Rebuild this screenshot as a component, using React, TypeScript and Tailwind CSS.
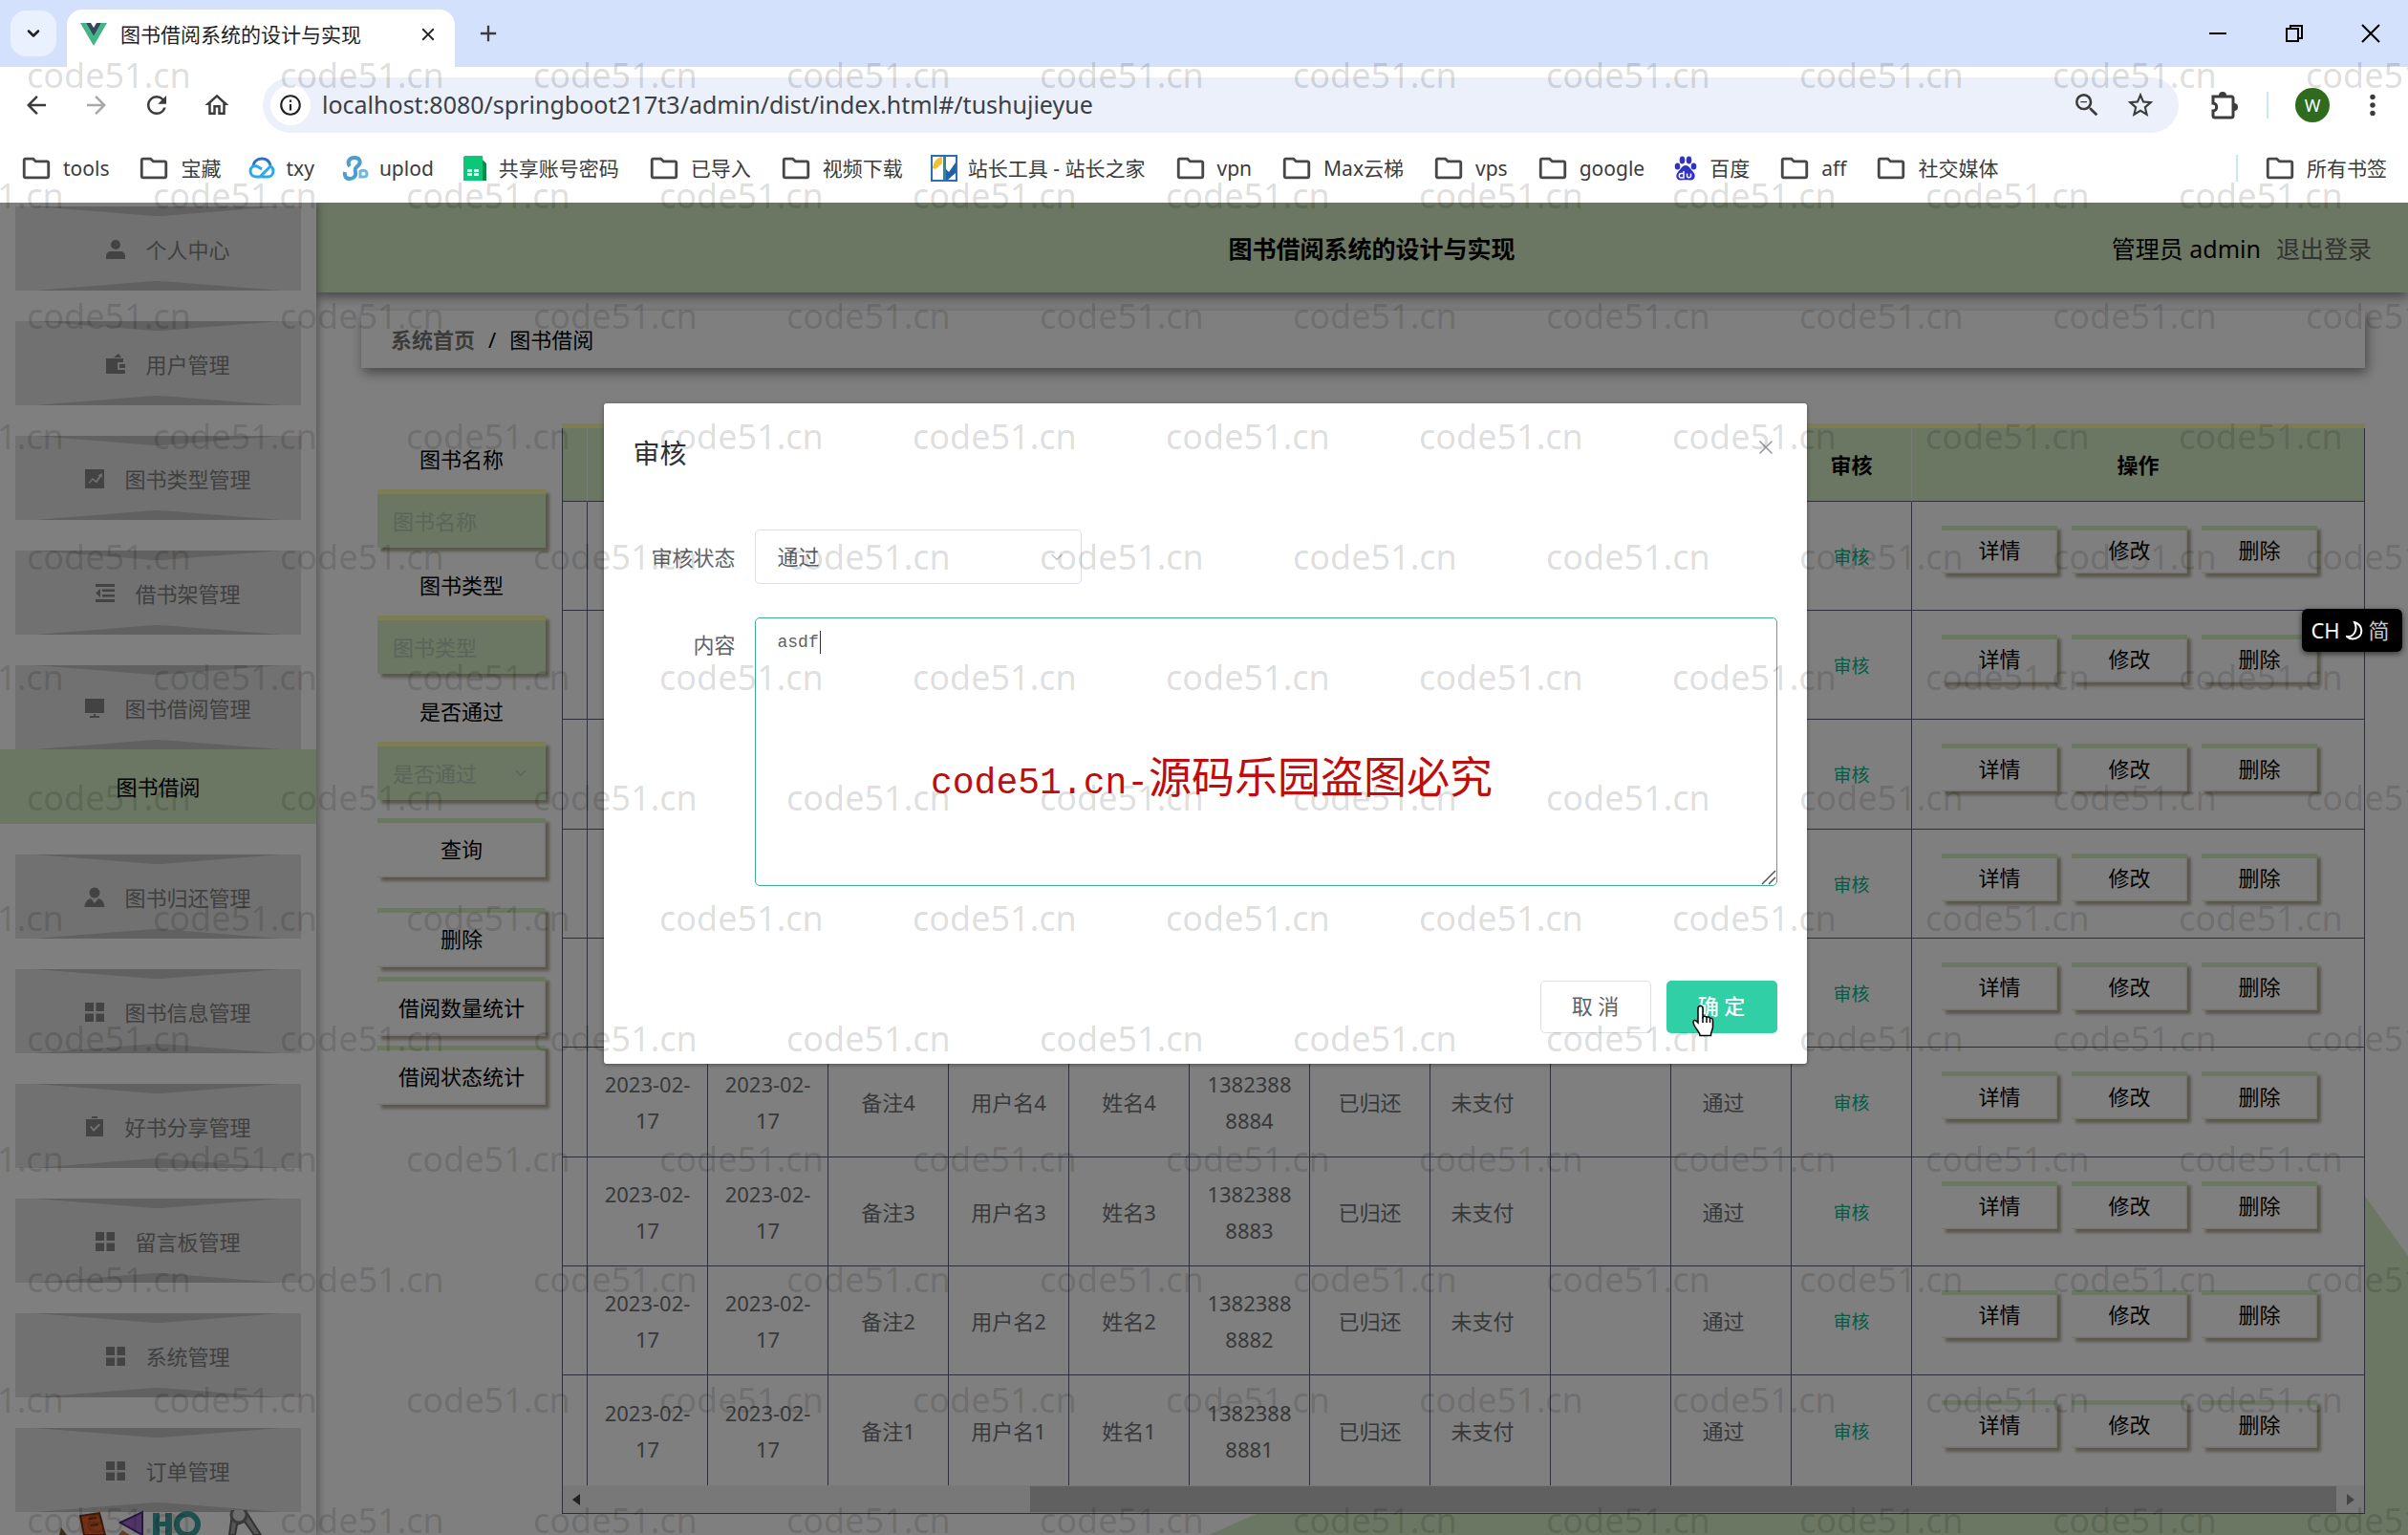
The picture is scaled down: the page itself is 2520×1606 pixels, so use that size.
import type { ReactNode } from 'react';
import {
  MdAdd,
  MdArrowBack,
  MdArrowForward,
  MdClose,
  MdInfoOutline,
  MdMoreVert,
  MdOutlineFolder,
  MdOutlineHome,
  MdRefresh,
  MdStarBorder,
  MdZoomOut,
} from 'react-icons/md';
import { ChevronDown, X } from 'lucide-react';

type IconName = 'user' | 'wallet' | 'trend' | 'fold' | 'monitor' | 'custom' | 'grid' | 'claim';

const MENU: { label: string; icon: IconName; child?: string }[] = [
  { label: '个人中心', icon: 'user' },
  { label: '用户管理', icon: 'wallet' },
  { label: '图书类型管理', icon: 'trend' },
  { label: '借书架管理', icon: 'fold' },
  { label: '图书借阅管理', icon: 'monitor', child: '图书借阅' },
  { label: '图书归还管理', icon: 'custom' },
  { label: '图书信息管理', icon: 'grid' },
  { label: '好书分享管理', icon: 'claim' },
  { label: '留言板管理', icon: 'grid' },
  { label: '系统管理', icon: 'grid' },
  { label: '订单管理', icon: 'grid' },
];

const ROWS = [9, 8, 7, 6, 5, 4, 3, 2, 1];

const ICONS: Record<IconName, ReactNode> = {
  user: (
    <>
      <circle cx="11" cy="6" r="5" />
      <path d="M1 21v-3c0-3 2-5 5-5h10c3 0 5 2 5 5v3z" />
    </>
  ),
  wallet: (
    <path
      fillRule="evenodd"
      d="M9 4l5-4 3 4zM1 5h18v4h-6v8h8v4H1zM15 11h6v4h-6z"
    />
  ),
  trend: (
    <path
      fillRule="evenodd"
      d="M1 1h20v20H1zM4.500 15l4.500-5 3.500 3 3.500-5-1.500-.5 4-2.500.5 5-1.500-1-4.500 6.500-4-3.500-3.500 4z"
    />
  ),
  fold: <path d="M1 1h20v3H1zM1 17h20v3H1zM8 6.500h13v2.500H8zM8 12h13v2.500H8zM6 6v9l-5-4.500z" />,
  monitor: <path d="M1 1h20v15H1zM10 17h2v2h4v2H6v-2h4z" />,
  custom: (
    <>
      <circle cx="11" cy="6" r="5.500" />
      <path d="M7 12l4 5 4-5c4 1 6 4 6.500 9h-21c.5-5 2.500-8 6.500-9z" />
    </>
  ),
  grid: <path d="M1 1h9v9H1zM12.500 1h8.500v9h-8.500zM1 12.500h9V21H1zM12.500 12.500h8.500V21h-8.500z" />,
  claim: (
    <path
      fillRule="evenodd"
      d="M8 0h6v2h-6zM2 3h18v18H2zM6 11l4 5 7-7-1.500-1.500-5.500 5.500-2.500-3z"
    />
  ),
};

function MenuIcon({ name }: { name: IconName }) {
  return (
    <svg viewBox="0 0 22 22" className="w-[22px] h-[22px] fill-[#868686] shrink-0">
      {ICONS[name]}
    </svg>
  );
}

function Folder() {
  return <MdOutlineFolder className="w-[34px] h-[34px] shrink-0 text-[#474747]" />;
}

function PuzzleIcon() {
  return (
    <svg viewBox="0 0 32 32" className="w-8 h-8" fill="none" stroke="#3c3c3c" strokeWidth="3">
      <path d="M4 7h19a2 2 0 012 2v18a2 2 0 01-2 2H6a2 2 0 01-2-2v-5c5 0 5-8 0-8z" />
      <path d="M10 6a4 4 0 018 0zM26 14a4 4 0 010 8z" fill="#3c3c3c" stroke="none" />
    </svg>
  );
}

function CloudIcon() {
  return (
    <svg viewBox="0 0 28 24" className="w-7 h-6" fill="none" strokeWidth="3">
      <path d="M5 11C5 5 9 2 14 2s8 3 9 7" stroke="#2b6fd0" />
      <path d="M14 13l-5-3C5 9 2 11 2 15s3 6 7 6h3l11-11c2 1 3 3 3 5 0 4-3 6-6 6h-6" stroke="#27a9ea" />
    </svg>
  );
}

function UploadIcon() {
  return (
    <svg viewBox="0 0 28 26" className="w-7 h-[26px]" fill="none" strokeWidth="4">
      <path d="M8 11c-3-4-1-9 5-9s7 5 4 8-4 3-3 7-2 7-6 7-6-3-5-7" stroke="#4f9ccf" />
      <path d="M19 22v-6c4-2 7 0 7 3s-2 3-4 3z" stroke="#6bb8e0" strokeWidth="3" />
    </svg>
  );
}

function SheetIcon() {
  return (
    <svg viewBox="0 0 24 26" className="w-6 h-[26px]">
      <path d="M0 2C0 1 1 0 2 0h18v26H0z" fill="#0bc777" />
      <path d="M20 4l4 4v18h-4z" fill="#078a4c" />
      <path d="M4 14h5v3H4zM11 14h5v3h-5zM4 18h5v3H4zM11 18h5v3h-5z" fill="#e9fff5" />
    </svg>
  );
}

function ToolsIcon() {
  return (
    <svg viewBox="0 0 28 28" className="w-7 h-7">
      <rect x="1" y="1" width="26" height="26" fill="#fff" stroke="#2a6fb0" strokeWidth="2" />
      <path d="M2 14c1-7 4-11 10-12v7L5 15z" fill="#f2c12e" />
      <path d="M13 2h3v24h-3z" fill="#2c8a8c" />
      <path d="M16 15l3 3 7-10v11l-8 7h-2z" fill="#1c63a8" />
    </svg>
  );
}

function PawIcon() {
  return (
    <svg viewBox="0 0 24 26" className="w-6 h-[26px]" fill="#2f32c8">
      <ellipse cx="3.500" cy="11" rx="2.800" ry="3.600" />
      <ellipse cx="8.500" cy="4.500" rx="2.800" ry="4" />
      <ellipse cx="15.500" cy="4.500" rx="2.800" ry="4" />
      <ellipse cx="20.500" cy="11" rx="2.800" ry="3.600" />
      <path d="M12 10c4 0 5 4 8 7s2 9-3 8.500c-4-.5-6-.5-10 0-5 .5-6-5.500-3-8.500s4-7 8-7z" />
      <path d="M10 16v7H7.500c-3 0-3-4.500 0-4.500H10M13.500 18.500v3c0 1.500 4 1.500 4 0v-3" fill="none" stroke="#fff" strokeWidth="1.500" />
    </svg>
  );
}

const BOOKMARKS: { label: string; icon?: ReactNode }[] = [
  { label: 'tools' },
  { label: '宝藏' },
  { label: 'txy', icon: <CloudIcon /> },
  { label: 'uplod', icon: <UploadIcon /> },
  { label: '共享账号密码', icon: <SheetIcon /> },
  { label: '已导入' },
  { label: '视频下载' },
  { label: '站长工具 - 站长之家', icon: <ToolsIcon /> },
  { label: 'vpn' },
  { label: 'Max云梯' },
  { label: 'vps' },
  { label: 'google' },
  { label: '百度', icon: <PawIcon /> },
  { label: 'aff' },
  { label: '社交媒体' },
];

function Bookmark({ label, icon }: { label: string; icon?: ReactNode }) {
  return (
    <a
      href="#"
      className={`flex items-center text-[21px] leading-8 text-[#3c3c3c] whitespace-nowrap ${icon ? 'gap-[11px]' : 'gap-[14px] pl-1'}`}
    >
      <span className="flex w-7 justify-center">{icon ?? <Folder />}</span>
      {label}
    </a>
  );
}

function BrowserBar() {
  return (
    <header className="shrink-0 bg-white text-[#3c3c3c]">
      <div className="flex h-[70px] items-end bg-[#d3e1fd]">
        <div className="flex h-[70px] items-center px-[11px]">
          <button aria-label="搜索标签页" className="flex h-12 w-12 items-center justify-center rounded-2xl bg-[#e9f0fe]">
            <ChevronDown className="w-5 h-5 text-[#1f1f1f]" strokeWidth={3} />
          </button>
        </div>
        <div className="flex h-[60px] w-[406px] items-center rounded-t-2xl bg-white pl-[14px] pr-[17px] pb-2">
          <svg viewBox="0 0 28 24" className="w-7 h-6">
            <path d="M0 0h6l8 14 8-14h6L14 24z" fill="#41b883" />
            <path d="M6 0h5l3 5 3-5h5l-8 14z" fill="#35495e" />
          </svg>
          <span className="ml-[14px] flex-1 text-[21px] leading-8 text-[#1f1f1f]">图书借阅系统的设计与实现</span>
          <button aria-label="关闭标签页">
            <MdClose className="w-[22px] h-[22px] text-[#1f1f1f]" />
          </button>
        </div>
        <button aria-label="新标签页" className="ml-[21px] flex h-[70px] items-center">
          <MdAdd className="w-7 h-7" />
        </button>
        <div className="ml-auto flex h-[70px] items-center gap-[60px] pr-[29px] text-black">
          <button aria-label="最小化" className="flex w-5 justify-center">
            <span className="h-[2px] w-[18px] bg-black" />
          </button>
          <button aria-label="还原">
            <svg viewBox="0 0 20 20" className="w-5 h-5" fill="none" stroke="#000" strokeWidth="2">
              <path d="M2 5h12v13H2z" />
              <path d="M6 5V2h12v13h-4" />
            </svg>
          </button>
          <button aria-label="关闭">
            <svg viewBox="0 0 20 20" className="w-5 h-5" stroke="#000" strokeWidth="2">
              <path d="M1 1l18 18M19 1L1 19" />
            </svg>
          </button>
        </div>
      </div>

      <div className="flex h-20 items-center pl-[23px] pr-5">
        <div className="flex items-center gap-[33px]">
          <button aria-label="后退"><MdArrowBack className="w-[30px] h-[30px]" /></button>
          <button aria-label="前进"><MdArrowForward className="w-[30px] h-[30px] text-[#a8a8a8]" /></button>
          <button aria-label="刷新"><MdRefresh className="w-[30px] h-[30px]" /></button>
          <button aria-label="主页"><MdOutlineHome className="w-[30px] h-[30px]" /></button>
        </div>
        <div className="ml-[33px] flex h-[58px] flex-1 items-center rounded-full bg-[#ebf0fa] pl-2 pr-6">
          <span className="flex h-[42px] w-[42px] items-center justify-center rounded-full bg-white">
            <MdInfoOutline className="w-[26px] h-[26px] text-[#1f1f1f]" />
          </span>
          <input
            aria-label="地址"
            readOnly
            value="localhost:8080/springboot217t3/admin/dist/index.html#/tushujieyue"
            className="ml-3 flex-1 bg-transparent text-[25px] text-[#3c3f43] outline-none"
          />
          <MdZoomOut className="w-[32px] h-[32px]" />
          <MdStarBorder className="ml-[24px] w-[32px] h-[32px]" />
        </div>
        <button aria-label="扩展程序" className="ml-8"><PuzzleIcon /></button>
        <span className="ml-[28px] h-7 w-[2px] bg-[#cfe2fc]" />
        <span className="ml-[28px] flex h-[36px] w-[36px] items-center justify-center rounded-full bg-[#2f6b1c] text-lg text-white">W</span>
        <button aria-label="更多" className="ml-7"><MdMoreVert className="w-[34px] h-[34px]" /></button>
      </div>

      <div className="flex h-[62px] items-center gap-[29px] pl-5 pr-[22px] pb-[10px]">
        {BOOKMARKS.map((b) => (
          <Bookmark key={b.label} {...b} />
        ))}
        <div className="ml-auto flex items-center gap-[26px]">
          <span className="h-7 w-[2px] bg-[#cfe2fc]" />
          <Bookmark label="所有书签" />
        </div>
      </div>
    </header>
  );
}

function Fold({ bottom }: { bottom?: boolean }) {
  return (
    <svg
      viewBox="0 0 100 10"
      preserveAspectRatio="none"
      className={`absolute inset-x-5 h-[10px] w-[258px] fill-[#c2c2c2] ${bottom ? 'bottom-0 rotate-180' : 'top-0'}`}
    >
      <path d="M0 0h100L54 9.500Q50 10.500 46 9.500z" />
    </svg>
  );
}

function Sidebar() {
  return (
    <nav className="relative z-10 w-[331px] shrink-0 bg-white pt-1 shadow-[2px_0_8px_rgba(0,0,0,0.35)]">
      {MENU.map((item) => (
        <div key={item.label} className={item.child ? '' : 'mb-8'}>
          <a
            href="#"
            className="relative mx-4 flex h-[88px] items-center justify-center gap-5 bg-[#e3e3e3] pl-5 pt-px text-[22px] leading-8 text-[#808080]"
          >
            <Fold />
            <Fold bottom />
            <MenuIcon name={item.icon} />
            {item.label}
          </a>
          {item.child && (
            <a href="#" className="mb-8 flex h-[78px] items-center justify-center bg-[#d6eec4] text-[22px] text-black">
              {item.child}
            </a>
          )}
        </div>
      ))}
      {/* Stationery doodle under the menu */}
      <svg viewBox="0 0 220 26" className="absolute bottom-0 left-[62px] h-[26px] w-[220px]">
        <path d="M0 26l2-8 6 8z" fill="#7a5a30" />
        <path d="M22 6l20-3 6 23H26z" fill="#e0602a" stroke="#803010" strokeWidth="2" />
        <path d="M31 9l8-1M33 16l8-1" stroke="#803010" strokeWidth="2" />
        <path d="M64 13l23-11v24z" fill="#a56bd0" stroke="#51307a" strokeWidth="2" />
        <path d="M62 26l4-5 8 5z" fill="#d07840" />
        <path d="M98 3h7v9h6V3h7v23h-7v-9h-6v9h-7z" fill="#3f9f9f" />
        <circle cx="134" cy="15" r="11" fill="none" stroke="#3f9f9f" strokeWidth="6" />
        <path d="M178 26l3-22 8 6 8-6 14 22h-7l-10-14-8 3-2 11z" fill="#aaa" stroke="#666" strokeWidth="2" />
        <circle cx="188" cy="5" r="8" fill="#ddd" stroke="#777" strokeWidth="3" />
      </svg>
    </nav>
  );
}

const FIELD =
  'block w-full h-[61px] rounded-none border-t-[5px] border-[#fbfba8] bg-[#d6eec4] px-4 text-[22px] text-[#b9c8b6] placeholder:text-[#b9c8b6] outline-none shadow-[4px_4px_3px_#b5b09c]';

const PANEL_BUTTON =
  'border-t-[5px] border-[#d6eec4] bg-white pb-1 text-[22px] leading-8 text-black shadow-[4px_4px_3px_#b5b09c,inset_-1px_-1px_2px_#e4e0cc]';

function Filters() {
  return (
    <form className="flex w-[210px] shrink-0 flex-col pl-[17px] pr-[17px] pt-[21px]">
      <label htmlFor="book" className="text-center text-[22px] leading-8">图书名称</label>
      <input id="book" placeholder="图书名称" className={`mt-4 ${FIELD}`} />
      <label htmlFor="kind" className="mt-[23px] text-center text-[22px] leading-8">图书类型</label>
      <input id="kind" placeholder="图书类型" className={`mt-4 ${FIELD}`} />
      <label htmlFor="passed" className="mt-[23px] text-center text-[22px] leading-8">是否通过</label>
      <div className="relative mt-4">
        <select id="passed" className={`appearance-none ${FIELD}`}>
          <option>是否通过</option>
        </select>
        <ChevronDown className="absolute right-[17px] top-6 w-[18px] h-[18px] text-[#b9c8b6]" />
      </div>
      <button type="button" className={`mt-[19px] h-[62px] ${PANEL_BUTTON}`}>查询</button>
      <button type="button" className={`mt-8 h-[62px] ${PANEL_BUTTON}`}>删除</button>
      <button type="button" className={`mt-[10px] h-[62px] ${PANEL_BUTTON}`}>借阅数量统计</button>
      <button type="button" className={`mt-[10px] h-[62px] ${PANEL_BUTTON}`}>借阅状态统计</button>
    </form>
  );
}

const HEADS = ['', '借阅日期', '应还日期', '备注', '用户名', '姓名', '手机号码', '归还状态', '是否支付', '审核回复', '审核状态', '审核'];

function Records() {
  return (
    <div className="flex min-w-0 flex-1 flex-col border-t-[5px] border-[#fbfba8]">
      <div className="border-x border-b border-[#5a6070] bg-white">
        <table className="w-full table-fixed border-separate border-spacing-0 text-center text-[22px]">
          <colgroup>
            <col className="w-[26px]" />
            {HEADS.slice(1).map((h) => (
              <col key={h} className="w-[126px]" />
            ))}
            <col />
          </colgroup>
          <thead>
            <tr className="h-[77px] bg-[#d6eec4] text-black">
              {HEADS.map((h) => (
                <th key={h} className="border-b border-r border-b-[#5a6070] border-r-[#eef6e8] p-0">{h}</th>
              ))}
              <th className="border-b border-b-[#5a6070] p-0">操作</th>
            </tr>
          </thead>
          <tbody className="text-[#707275] [&_td]:border-b [&_td]:border-r [&_td]:border-[#5a6070] [&_td:last-child]:border-r-0 [&>tr:last-child>td]:border-b-0">
            {ROWS.map((n) => (
              <tr key={n} className="h-[114px] leading-[38px] nth-[3n]:h-[115px]">
                <td className="p-0" />
                <td className="p-0">2023-02-<br />17</td>
                <td className="p-0">2023-02-<br />17</td>
                <td className="p-0">备注{n}</td>
                <td className="p-0">用户名{n}</td>
                <td className="p-0">姓名{n}</td>
                <td className="p-0">1382388<br />888{n}</td>
                <td className="p-0">已归还</td>
                <td className="p-0 pr-4">未支付</td>
                <td className="p-0" />
                <td className="p-0 pr-4">通过</td>
                <td className="p-0"><button className="text-[19px] text-[#10b583]">审核</button></td>
                <td className="p-0">
                  <div className="flex justify-center gap-[15px] pb-[14px] pr-[18px]">
                    {['详情', '修改', '删除'].map((label) => (
                      <button key={label} className={`h-[50px] w-[121px] ${PANEL_BUTTON}`}>{label}</button>
                    ))}
                  </div>
                </td>
              </tr>
            ))}
          </tbody>
        </table>
        {/* Horizontal scrollbar */}
        <div className="flex h-[29px] items-center bg-[#f1f1f1] px-[10px]">
          <span className="border-y-[6px] border-r-[8px] border-y-transparent border-r-[#444]" />
          <span className="ml-auto h-[27px] w-[1367px] bg-[#c1c1c1]" />
          <span className="ml-[11px] border-y-[6px] border-l-[8px] border-y-transparent border-l-[#8a8a8a]" />
        </div>
      </div>
    </div>
  );
}

function AuditDialog() {
  return (
    <div className="absolute inset-0 z-20 flex items-start justify-center bg-black/50 pt-[210px] pl-[2px]">
      <section
        role="dialog"
        aria-labelledby="dialog-title"
        className="w-1/2 rounded-[3px] bg-white pb-8 pr-[31px] text-[22px] leading-8 text-[#606266] shadow-[0_1px_4px_rgba(0,0,0,0.4)]"
      >
        <div className="flex h-[132px] items-start justify-between pl-[31px] pt-[34px]">
          <h2 id="dialog-title" className="text-[28px] leading-9 text-[#303133]">审核</h2>
          <button aria-label="关闭">
            <X className="w-6 h-6 text-[#909399]" strokeWidth={1.5} />
          </button>
        </div>
        <div className="flex items-center gap-5">
          <label htmlFor="status" className="w-[138px] shrink-0 text-right">审核状态</label>
          <div className="relative w-[342px]">
            <select id="status" className="h-[57px] w-full appearance-none rounded-[5px] border border-[#dcdfe6] bg-white px-[23px] pb-[2px] outline-none">
              <option>通过</option>
            </select>
            <ChevronDown className="absolute right-4 top-[19px] w-5 h-5 text-[#c0c4cc]" strokeWidth={1.5} />
          </div>
        </div>
        <div className="mt-[35px] flex gap-5">
          <label htmlFor="content" className="mt-3 w-[138px] shrink-0 text-right">内容</label>
          <div className="relative flex-1">
            <textarea
              id="content"
              defaultValue="asdf"
              className="block h-[281px] w-full resize-none rounded-[5px] border border-[#3fae92] px-[23px] py-[9px] font-['Liberation_Mono',monospace] text-lg leading-8 outline-none"
            />
            <span className="absolute left-[68px] top-[14px] h-6 w-px bg-[#303133]" />
            <svg viewBox="0 0 16 16" className="absolute bottom-px right-px w-4 h-4" stroke="#555" strokeWidth="1.500">
              <path d="M1 15L15 1M8 15l7-7" />
            </svg>
          </div>
        </div>
        <div className="mt-[99px] flex justify-end gap-4">
          <button className="h-[55px] w-[116px] rounded-[5px] border border-[#dcdfe6] pb-1">取 消</button>
          <button className="h-[55px] w-[116px] rounded-[5px] bg-[#30cfa6] pb-1 font-medium text-white">确 定</button>
        </div>
      </section>
    </div>
  );
}

function Watermarks() {
  return (
    <div className="pointer-events-none absolute inset-0 z-40 select-none overflow-hidden pt-[46px]">
      {Array.from({ length: 13 }, (_, row) => (
        <div key={row} className={`flex h-[126px] ${row % 2 ? '-ml-[105px]' : 'ml-[28px]'}`}>
          {Array.from({ length: 10 }, (_, col) => (
            <span key={col} className="w-[265px] shrink-0 text-[36px] leading-[66px] text-black/15">code51.cn</span>
          ))}
        </div>
      ))}
    </div>
  );
}

export default function App() {
  return (
    <div className="relative flex h-screen flex-col overflow-hidden bg-white font-['Noto_Sans','Noto_Sans_CJK_SC',sans-serif] text-black">
      <BrowserBar />
      <div className="relative flex min-h-0 flex-1 overflow-hidden">
        <Sidebar />
        <main className="relative min-w-0 flex-1">
          <svg viewBox="0 0 1260 356" className="absolute bottom-0 right-0 h-[356px] w-[1260px] fill-[#d6eec4]">
            <path d="M5 356L70 327 600 250 1170 0h44l46 64v292z" />
          </svg>
          <div className="relative flex h-[94px] items-center bg-[#d6eec4] px-[38px] text-[25px] leading-9 shadow-[0_4px_12px_rgba(0,0,0,0.5)]">
            <div className="w-[320px]" />
            <h1 className="flex-1 pt-[2px] text-center font-bold">图书借阅系统的设计与实现</h1>
            <div className="flex w-[300px] justify-end gap-4 whitespace-nowrap pt-[2px]">
              <span>管理员 admin</span>
              <a href="#" className="text-[#666]">退出登录</a>
            </div>
          </div>
          <div className="relative pl-[47px] pr-[45px]">
            <div className="mt-[19px] flex h-[60px] items-center gap-[14px] bg-white pl-[31px] text-[22px] leading-8 shadow-[2px_5px_12px_rgba(0,0,0,0.45)]">
              <a href="#" className="font-bold text-[#777]">系统首页</a>
              <span>/</span>
              <span>图书借阅</span>
            </div>
            <div className="mt-[58px] flex items-start">
              <Filters />
              <Records />
            </div>
          </div>
        </main>
        <AuditDialog />
      </div>

      <Watermarks />

      {/* Notice across the page */}
      <div className="absolute left-[974px] top-[778px] z-40 whitespace-nowrap text-[45px] leading-[70px] text-[#c00c0c]">
        <span className="font-['Liberation_Mono',monospace] text-[38px]">code51.cn-</span>
        源码乐园盗图必究
      </div>

      {/* Input method badge */}
      <div className="absolute right-[6px] top-[637px] z-50 flex h-[45px] w-[105px] items-center justify-center gap-[6px] rounded-md bg-black pr-1 text-[22px] text-white shadow-[0_2px_6px_rgba(0,0,0,0.6)]">
        <span>CH</span>
        <svg viewBox="0 0 18 20" className="w-[18px] h-5" fill="none" stroke="#fff" strokeWidth="2">
          <path d="M9 1c9 3 10 14 1 17-4 1-7 0-9-2 7 1 12-7 8-15z" />
        </svg>
        <span className="text-[#c8c8c8]">简</span>
      </div>

      {/* Pointer */}
      <svg viewBox="0 0 24 34" className="absolute left-[1770px] top-[1051px] z-50 h-[34px] w-6" fill="#fff" stroke="#000" strokeWidth="1.500">
        <path d="M8 2c2-1.500 4 0 4 2v9c1-1 3-1 4 .5 1-1 3-.5 3.500 1 2-.5 3 .5 3 2v7c0 3-2 4-2 9H9c0-4-6-8-7-14 0-2 2-3 3.500-1L7 19V4c0-1 0-1.500 1-2z" />
        <path d="M12 13v6M16 14v5M19.500 15v4" />
      </svg>
    </div>
  );
}
